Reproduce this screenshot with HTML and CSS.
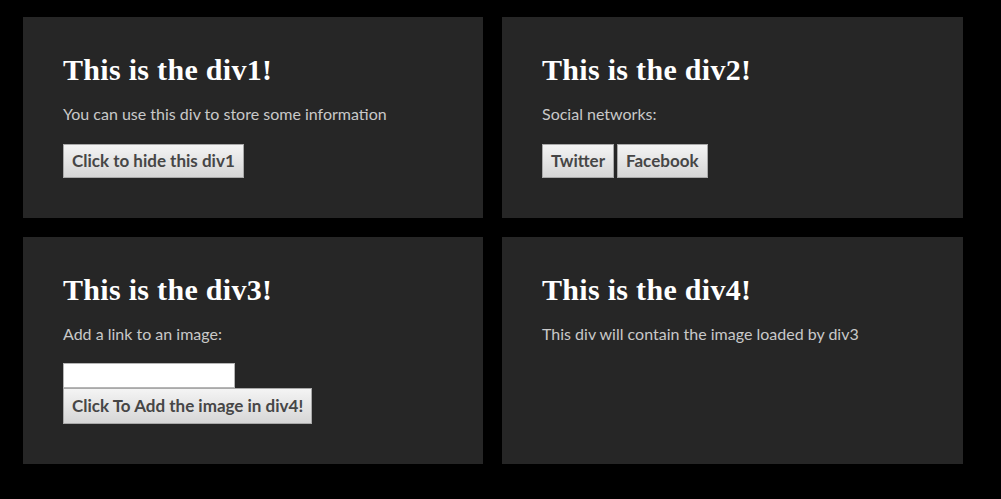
FILE: index.html
```html
<!DOCTYPE html>
<html>
<head>
<meta charset="utf-8">
<link rel="stylesheet" href="styles.css">
</head>
<body>
<div class="grid">
  <section class="panel">
    <h1>This is the div1!</h1>
    <p>You can use this div to store some information</p>
    <div class="actions"><button class="btn">Click to hide this div1</button></div>
  </section>
  <section class="panel">
    <h1>This is the div2!</h1>
    <p>Social networks:</p>
    <div class="actions"><button class="btn">Twitter</button><button class="btn">Facebook</button></div>
  </section>
  <section class="panel">
    <h1>This is the div3!</h1>
    <p>Add a link to an image:</p>
    <div class="stack">
      <input class="field" type="text">
      <button class="btn">Click To Add the image in div4!</button>
    </div>
  </section>
  <section class="panel">
    <h1>This is the div4!</h1>
    <p>This div will contain the image loaded by div3</p>
  </section>
</div>
</body>
</html>
```
FILE: styles.css
```css
html, body {
  margin: 0;
  padding: 0;
  background: #000;
}
body {
  font-family: Lato, "Open Sans", sans-serif;
}
.grid {
  display: grid;
  grid-template-columns: 460px 461px;
  column-gap: 19px;
  row-gap: 19px;
  padding: 17px 0 0 23px;
}
.panel {
  background: #262626;
  padding: 35px 40px 40px;
}
.panel h1 {
  margin: 0;
  font-family: "Liberation Serif", serif;
  font-weight: bold;
  font-size: 30px;
  line-height: 36px;
  letter-spacing: 0.3px;
  color: #fff;
}
.panel p {
  margin: 16px 0 0;
  font-size: 16px;
  line-height: 20px;
  color: #c9c9c9;
}
.actions {
  display: flex;
  gap: 3px;
  margin-top: 20px;
}
.stack {
  display: flex;
  flex-direction: column;
  align-items: flex-start;
  margin-top: 19px;
}
.btn {
  font-family: Lato, "Open Sans", sans-serif;
  font-weight: bold;
  font-size: 17px;
  line-height: 20px;
  color: #464646;
  padding: 6px 8px;
  border: 1px solid #a9a9a9;
  border-radius: 0;
  background: linear-gradient(#f4f4f4, #d6d6d6);
  margin: 0;
}
.stack .btn {
  padding: 7px 8px;
}
.field {
  box-sizing: border-box;
  width: 172px;
  height: 25px;
  margin: 0;
  border: 1px solid #b5b5b5;
  background: #fff;
  padding: 0 4px;
}
```
